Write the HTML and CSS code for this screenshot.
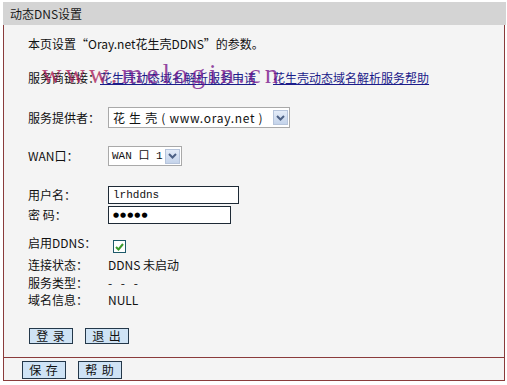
FILE: index.html
```html
<!DOCTYPE html>
<html lang="zh-CN">
<head>
<meta charset="utf-8">
<title>动态DNS设置</title>
<link rel="stylesheet" href="styles.css">
</head>
<body>
<div class="wrap">
  <div class="title">动态DNS设置</div>
  <div class="panel">
    <div class="main">
      <div class="row intro">本页设置“Oray.net花生壳DDNS”的参数。</div>
      <div class="row links">
        <span class="lbl-auto">服务商链接：</span><a class="lnk" href="#">花生壳动态域名解析服务申请</a><a class="lnk second" href="#">花生壳动态域名解析服务帮助</a>
        <span class="wm"><span class="wm-a">www.</span>melogin.cn</span>
      </div>
      <div class="row provider">
        <span class="lbl">服务提供者：</span>
        <span class="select wide"><span class="sel-text">花 生 壳 ( www.oray.net )</span><span class="arrow"><svg width="9" height="6" viewBox="0 0 9 6"><path d="M1 1 L4.5 4.5 L8 1" fill="none" stroke="#4d6185" stroke-width="2"/></svg></span></span>
      </div>
      <div class="row wan">
        <span class="lbl">WAN口：</span>
        <span class="select narrow"><span class="sel-text mono">WAN 口 1</span><span class="arrow"><svg width="9" height="6" viewBox="0 0 9 6"><path d="M1 1 L4.5 4.5 L8 1" fill="none" stroke="#4d6185" stroke-width="2"/></svg></span></span>
      </div>
      <div class="row user">
        <span class="lbl">用户名：</span>
        <span class="input user-in">lrhddns</span>
      </div>
      <div class="row pass">
        <span class="lbl">密 码：</span>
        <span class="input pass-in"><span class="dots">●●●●●</span></span>
      </div>
      <div class="row enable">
        <span class="lbl">启用DDNS：</span>
        <span class="check"><svg width="9" height="8" viewBox="0 0 9 8"><path d="M1 4 L3.5 6.5 L8 1" fill="none" stroke="#3a9a2a" stroke-width="2"/></svg></span>
      </div>
      <div class="row status"><span class="lbl">连接状态：</span><span class="val">DDNS 未启动</span></div>
      <div class="row type"><span class="lbl">服务类型：</span><span class="val dashes">- - -</span></div>
      <div class="row domain"><span class="lbl">域名信息：</span><span class="val">NULL</span></div>
      <div class="row btns">
        <span class="btn">登 录</span>
        <span class="btn">退 出</span>
      </div>
    </div>
    <div class="foot">
      <span class="btn">保 存</span>
      <span class="btn">帮 助</span>
    </div>
  </div>
</div>
</body>
</html>
```
FILE: styles.css
```css
html, body {
  margin: 0;
  padding: 0;
  background: #ffffff;
}
body {
  font-family: "Noto Sans CJK SC", "Liberation Sans", sans-serif;
  font-size: 12px;
  color: #111;
}
.wrap {
  padding: 2px 0 0 3px;
  width: 502px;
}
.title {
  height: 23px;
  line-height: 23px;
  background: #d4d4d4;
  padding-left: 7px;
  color: #1a1a1a;
  width: 496px;
}
.panel {
  border: 1px solid #8a3b3b;
  border-top: none;
  background: #f4f4f4;
}
.main {
  height: 332px;
  padding: 10px 0 0 24px;
  box-sizing: border-box;
  display: flex;
  flex-direction: column;
}
.row {
  display: flex;
  align-items: center;
  height: 18px;
  line-height: 18px;
  white-space: nowrap;
}
.lbl {
  width: 80px;
  flex: none;
}
.intro { color: #111; }
.links {
  margin-top: 16px;
  position: relative;
}
.lnk {
  color: #1c1c8a;
  text-decoration: underline;
}
.lnk.second {
  margin-left: 17px;
}
.wm {
  position: absolute;
  left: 14px;
  top: -10px;
  font-family: "Liberation Serif", serif;
  font-size: 27px;
  letter-spacing: 4px;
  line-height: 30px;
  color: rgba(120, 20, 140, 0.78);
  pointer-events: none;
}
.wm-a {
  color: rgba(170, 30, 90, 0.8);
}
.provider {
  margin-top: 20px;
  height: 21px;
}
.select {
  display: flex;
  align-items: center;
  justify-content: space-between;
  background: #fff;
  border: 1px solid #a9a9a9;
  box-sizing: border-box;
  height: 21px;
  padding: 0 1px 0 4px;
}
.select.wide { width: 182px; }
.select.narrow { width: 74px; height: 20px; padding-left: 3px; }
.sel-text {
  font-size: 12px;
  letter-spacing: 0.7px;
}
.mono {
  font-family: "Liberation Mono", "Noto Sans CJK SC", monospace;
  font-size: 11px;
  letter-spacing: 0;
}
.arrow {
  width: 15px;
  height: 15px;
  box-sizing: border-box;
  border: 1px solid #b6c4db;
  background: linear-gradient(#e4ecf8, #c4d3ea);
  display: flex;
  align-items: center;
  justify-content: center;
}
.wan {
  margin-top: 18px;
  height: 20px;
}
.user {
  margin-top: 20px;
}
.pass {
  margin-top: 2px;
}
.input {
  display: flex;
  align-items: center;
  box-sizing: border-box;
  height: 18px;
  background: #fff;
  border: 1px solid #1e2a36;
  padding-left: 4px;
}
.user-in {
  width: 131px;
  font-family: "Liberation Mono", monospace;
  font-size: 11px;
}
.pass-in { width: 123px; }
.dots {
  font-family: "DejaVu Sans", sans-serif;
  font-size: 7px;
  letter-spacing: 1px;
  color: #000;
}
.enable {
  margin-top: 10px;
  align-items: flex-start;
}
.check {
  margin-top: 6px;
  margin-left: 5px;
  width: 13px;
  height: 13px;
  box-sizing: border-box;
  border: 1px solid #1d5a6a;
  background: #fff;
  display: flex;
  align-items: center;
  justify-content: center;
}
.status { margin-top: 4px; }
.type { height: 17px; }
.val { color: #111; }
.dashes { letter-spacing: 3px; }
.btns {
  margin-top: 19px;
  height: 16px;
  gap: 11px;
}
.btn {
  display: inline-flex;
  align-items: center;
  justify-content: center;
  width: 44px;
  height: 16px;
  box-sizing: border-box;
  background: #cfe3f5;
  border: 1px solid #24384a;
  letter-spacing: 1px;
  line-height: 14px;
  font-size: 12px;
  color: #111;
}
.btns .btn { margin-left: 1px; }
.foot {
  border-top: 1px solid #8a3b3b;
  height: 23px;
  box-sizing: border-box;
  padding: 3px 0 0 18px;
  display: flex;
  align-items: flex-start;
  gap: 12px;
}
.foot .btn { height: 18px; }
```
